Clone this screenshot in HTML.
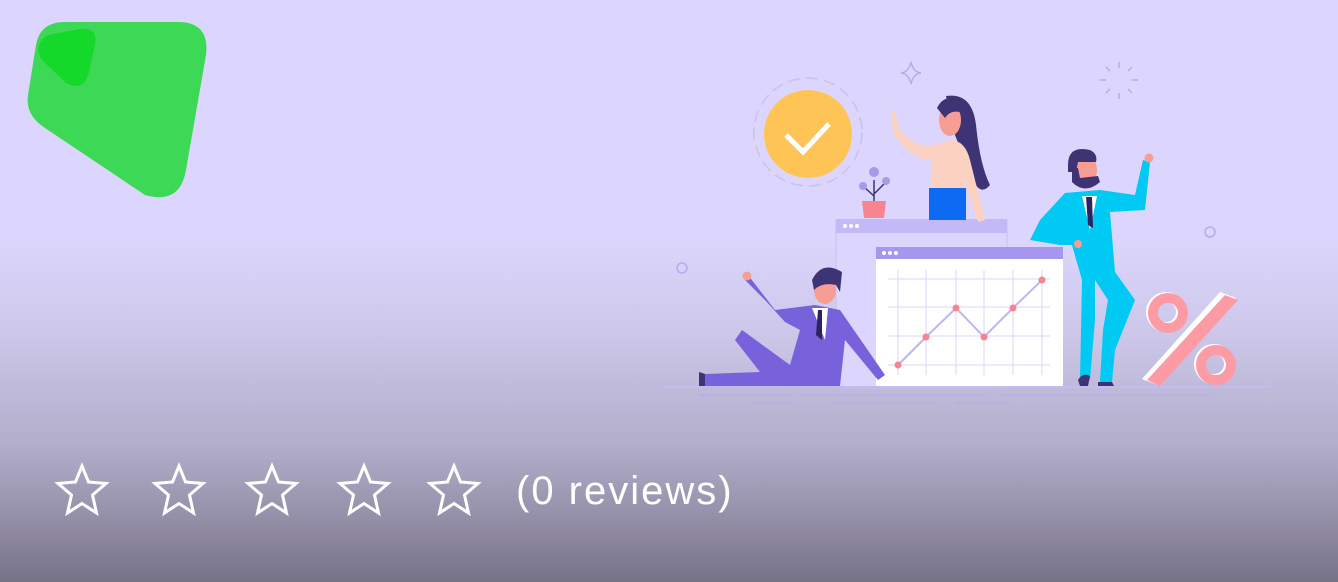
<!DOCTYPE html>
<html><head><meta charset="utf-8"><style>
html,body{margin:0;padding:0}
body{width:1338px;height:582px;overflow:hidden;position:relative;font-family:"Liberation Sans",sans-serif;
background:linear-gradient(180deg,#dcd6fe 0px,#dcd6fe 240px,#cdc7ea 330px,#b4afcc 440px,#9893ac 510px,#767286 582px);}
svg{position:absolute;left:0;top:0}
.t{position:absolute;left:516px;top:469px;font-size:40px;color:#fff;letter-spacing:2px}
</style></head><body>
<svg width="1338" height="582" viewBox="0 0 1338 582">
 <path d="M65 22 L178 22 Q210 22 206 55 L186 170 Q180 205 145 195 L45 128 Q25 115 28 95 L36 45 Q40 22 65 22Z" fill="#3dd856"/>
 <path d="M48 35 L80 29 Q98 27 95 45 L89 72 Q84 92 66 83 L42 60 Q32 45 48 35Z" fill="#14d82a"/>
 <circle cx="808" cy="132" r="54" fill="none" stroke="#c9c2ec" stroke-width="1.5" stroke-dasharray="12 6"/>
 <circle cx="808" cy="134" r="44" fill="#fec556"/>
 <path d="M786 135 L803 152 L829 124" fill="none" stroke="#fff" stroke-width="5"/>
 <path d="M911 62 Q913 72 921 73 Q913 74 911 84 Q909 74 901 73 Q909 72 911 62Z" fill="none" stroke="#b6acf0" stroke-width="1.5"/>
 <g stroke="#b6acf0" stroke-width="1.5"><line x1="1119" y1="62" x2="1119" y2="68"/><line x1="1119" y1="93" x2="1119" y2="99"/><line x1="1100" y1="80" x2="1106" y2="80"/><line x1="1132" y1="80" x2="1138" y2="80"/><line x1="1106" y1="67" x2="1110" y2="71"/><line x1="1128" y1="89" x2="1132" y2="93"/><line x1="1132" y1="67" x2="1128" y2="71"/><line x1="1106" y1="93" x2="1110" y2="89"/></g>
 <circle cx="682" cy="268" r="5" fill="none" stroke="#b6acf0" stroke-width="1.5"/>
 <circle cx="1210" cy="232" r="5" fill="none" stroke="#b6acf0" stroke-width="1.5"/>
 <rect x="836" y="220" width="171" height="168" fill="#dcd6fe" stroke="#c8c0f2"/>
 <rect x="836" y="219" width="171" height="14" fill="#c4b9f6"/>
 <g fill="#fff"><circle cx="845" cy="226" r="2"/><circle cx="851" cy="226" r="2"/><circle cx="857" cy="226" r="2"/></g>
 <path d="M862 201 H886 L884 218 H864Z" fill="#f7858f"/>
 <path d="M874 201 V180 M874 196 L864 187 M874 194 L885 183" stroke="#3e3374" stroke-width="1.5"/>
 <circle cx="874" cy="172" r="5" fill="#a79ae9"/><circle cx="863" cy="186" r="4" fill="#a79ae9"/><circle cx="886" cy="181" r="4" fill="#a79ae9"/>
 <path d="M946 96 Q972 92 976 125 Q980 165 990 185 Q980 197 972 178 L955 135Z" fill="#3e3374"/>
 <path d="M894 110 L900 130 Q918 150 935 145 L950 140 Q965 140 970 160 L985 220 L978 222 L965 180 L965 195 H930 L932 160 Q910 160 893 132 L891 112Z" fill="#fbd2c1"/>
 <ellipse cx="950" cy="120" rx="11" ry="16" fill="#f79d94"/>
 <path d="M937 108 Q945 92 962 102 L960 112 Q950 110 945 118Z" fill="#3e3374"/>
 <rect x="929" y="188" width="37" height="32" fill="#0d6af2"/>
 <rect x="876" y="247" width="187" height="139" fill="#fff"/>
 <rect x="876" y="247" width="187" height="12" fill="#a596ef"/>
 <g fill="#fff"><circle cx="884" cy="253" r="2"/><circle cx="890" cy="253" r="2"/><circle cx="896" cy="253" r="2"/></g>
 <g stroke="#ddd6fb" stroke-width="1"><line x1="888" y1="279" x2="1050" y2="279"/><line x1="888" y1="307" x2="1050" y2="307"/><line x1="888" y1="336" x2="1050" y2="336"/><line x1="888" y1="365" x2="1050" y2="365"/>
 <line x1="898" y1="270" x2="898" y2="375"/><line x1="926" y1="270" x2="926" y2="375"/><line x1="956" y1="270" x2="956" y2="375"/><line x1="984" y1="270" x2="984" y2="375"/><line x1="1013" y1="270" x2="1013" y2="375"/><line x1="1042" y1="270" x2="1042" y2="375"/></g>
 <polyline points="898,365 926,337 956,308 984,337 1013,308 1042,280" fill="none" stroke="#c0b5f3" stroke-width="2"/>
 <g fill="#f7858f"><circle cx="898" cy="365" r="3.5"/><circle cx="926" cy="337" r="3.5"/><circle cx="956" cy="308" r="3.5"/><circle cx="984" cy="337" r="3.5"/><circle cx="1013" cy="308" r="3.5"/><circle cx="1042" cy="280" r="3.5"/></g>
 <path d="M748 275 L775 310 L815 305 L840 310 L885 375 L878 380 L845 340 L840 386 H705 V374 L760 372 L735 340 L742 330 L790 365 L800 330 L785 322 L765 300 L745 280Z" fill="#7762dc"/>
 <path d="M812 308 L825 340 L828 308Z" fill="#fff"/>
 <path d="M818 310 L816 335 L822 340 L822 310Z" fill="#2b2460"/>
 <ellipse cx="825" cy="290" rx="11" ry="14" fill="#f79d94"/>
 <path d="M812 280 Q822 260 842 272 L840 292 L836 285 Q822 282 814 290Z" fill="#3e3374"/>
 <circle cx="747" cy="276" r="4.5" fill="#f79d94"/>
 <path d="M699 386 V372 L705 374 V386Z" fill="#3e3374"/>
 <path d="M1065 193 L1100 190 L1135 195 L1143 160 L1150 162 L1145 210 L1110 212 L1115 272 L1135 300 L1115 350 L1112 382 L1100 382 L1103 330 L1108 300 L1095 280 L1095 320 L1090 380 L1080 380 L1082 280 L1072 245 L1060 245 L1030 240 L1040 220Z" fill="#00c9f3"/>
 <path d="M1082 196 L1090 230 L1097 196Z" fill="#fff"/>
 <path d="M1086 197 L1088 225 L1093 228 L1092 197Z" fill="#2b2460"/>
 <ellipse cx="1085" cy="170" rx="12" ry="15" fill="#f79d94"/>
 <path d="M1072 182 Q1085 195 1100 182 L1098 176 L1080 178 L1078 168 L1072 168Z" fill="#3e3374"/>
 <path d="M1068 165 Q1068 145 1090 150 Q1098 154 1096 162 L1078 162 L1076 172 L1068 172Z" fill="#3e3374"/>
 <circle cx="1149" cy="158" r="4.5" fill="#f79d94"/>
 <circle cx="1078" cy="244" r="4" fill="#f79d94"/>
 <path d="M1078 380 Q1083 372 1090 376 L1088 386 H1080Z M1098 382 L1112 382 L1114 386 H1098Z" fill="#3e3374"/>
 <path d="M1220 292 L1236 298 L1158 385 L1142 379Z" fill="#fff"/>
 <path d="M1225 295 L1238 300 L1160 386 L1147 380Z" fill="#fc9ba3"/>
 <circle cx="1166" cy="312" r="15" fill="none" stroke="#fff" stroke-width="10"/>
 <circle cx="1168" cy="313" r="15" fill="none" stroke="#fc9ba3" stroke-width="10"/>
 <circle cx="1214" cy="364" r="15" fill="none" stroke="#fff" stroke-width="10"/>
 <circle cx="1216" cy="365" r="15" fill="none" stroke="#fc9ba3" stroke-width="10"/>
 <line x1="662" y1="387" x2="1270" y2="387" stroke="#c4baf2" stroke-width="2"/>
 <g stroke="#b3a9e6" stroke-width="1"><line x1="700" y1="395" x2="790" y2="395"/><line x1="800" y1="395" x2="985" y2="395"/><line x1="1000" y1="395" x2="1210" y2="395"/><line x1="750" y1="403" x2="790" y2="403"/><line x1="830" y1="403" x2="935" y2="403"/><line x1="955" y1="403" x2="1010" y2="403"/></g>
 <g fill="none" stroke="#fff" stroke-width="3" stroke-linejoin="miter">
  <path id="s" d="M82 466 L88.5 482 L106 483.5 L92.5 495 L96.5 513 L82 503.5 L67.5 513 L71.5 495 L58 483.5 L75.5 482Z"/>
  <use href="#s" x="97"/><use href="#s" x="190"/><use href="#s" x="282"/><use href="#s" x="372"/>
 </g>
</svg>
<div class="t">(0 reviews)</div>
</body></html>
